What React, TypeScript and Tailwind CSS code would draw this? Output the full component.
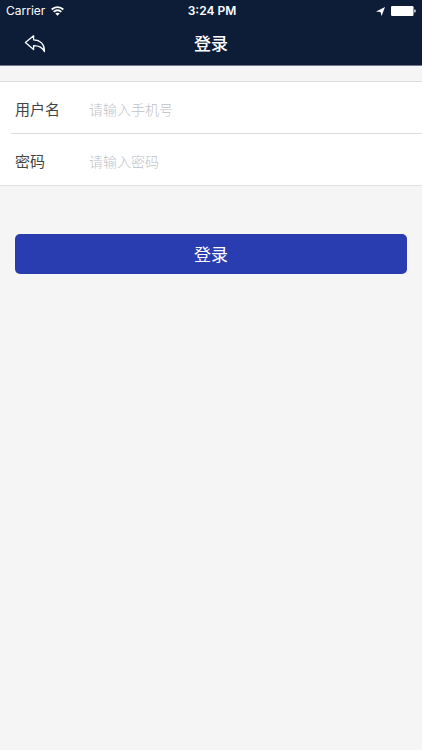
import React from "react";

function StatusBar() {
  return (
    <div className="grid h-[22px] grid-cols-3 items-center px-[6px] font-['Inter',sans-serif] text-[12px] leading-[22px]">
      <div className="flex items-center gap-[6px]">
        <span>Carrier</span>
        <svg width="13" height="10" viewBox="0 0 13 10" fill="none" stroke="currentColor" strokeWidth="1.9" aria-hidden="true">
          <path d="M0.7 3.5C4 0.3 9 0.3 12.3 3.5" />
          <path d="M2.7 5.9C5 3.9 8 3.9 10.3 5.9" />
          <path d="M6.5 9.8L4.3 7.6C5.6 6.6 7.4 6.6 8.7 7.6Z" fill="currentColor" stroke="none" />
        </svg>
      </div>
      <span className="pl-[2px] text-center font-semibold">3:24 PM</span>
      <div className="flex items-center justify-end gap-[6px]">
        <svg width="9" height="9" viewBox="0 0 9 9" fill="currentColor" aria-hidden="true">
          <path d="M9 0L5.6 9L4.5 5L0 4.4Z" />
        </svg>
        <svg width="25" height="10" viewBox="0 0 25 10" fill="currentColor" aria-hidden="true">
          <rect x="0" y="0" width="22.5" height="10" rx="1.2" />
          <path d="M23.3 3.3C25.2 3.6 25.2 6.4 23.3 6.7Z" />
        </svg>
      </div>
    </div>
  );
}

type FieldProps = {
  id: string;
  label: string;
  placeholder: string;
  type: string;
};

function Field({ id, label, placeholder, type }: FieldProps) {
  return (
    <div className="flex h-[51px] items-stretch pr-4 pl-[4px]">
      <label htmlFor={id} className="flex w-[74px] shrink-0 items-center pt-1 text-[15px] text-[#444444]">
        {label}
      </label>
      <input
        id={id}
        type={type}
        placeholder={placeholder}
        className="min-w-0 flex-1 bg-transparent pt-[3px] text-[14px] font-light text-[#444444] outline-none placeholder:text-[#bfbfc6]"
      />
    </div>
  );
}

export default function App() {
  return (
    <div className="min-h-screen bg-[#f5f5f5] font-['Noto_Sans_CJK_SC',sans-serif]">
      <header className="border-b border-[#6f788a] bg-[#0d1d38] text-white">
        <StatusBar />
        <div className="grid h-[43px] grid-cols-[1fr_auto_1fr] items-center">
          <button type="button" aria-label="返回" className="ml-6 w-fit">
            <svg width="22" height="18" viewBox="0 0 22 18" fill="none" stroke="currentColor" strokeWidth="1.3" strokeLinejoin="round" aria-hidden="true">
              <path d="M1.4 7.6L9.6 0.8V4.8C16 4.9 20.8 9 20.4 16.6C18.5 12.3 15 10.6 9.6 10.6V14.6Z" />
            </svg>
          </button>
          <h1 className="pb-[2px] text-[17px] font-medium">登录</h1>
        </div>
      </header>
      <form onSubmit={(e) => e.preventDefault()}>
        <div className="mt-[15px] border-y border-[#e0e0e1] bg-white pl-[11px]">
          <Field id="username" label="用户名" placeholder="请输入手机号" type="text" />
          <div className="border-t border-[#dcdcdd]">
            <Field id="password" label="密码" placeholder="请输入密码" type="password" />
          </div>
        </div>
        <div className="px-[15px] pt-[48px]">
          <button type="submit" className="h-[40px] w-full rounded-[5px] bg-[#293cb0] text-[17px] text-white">
            登录
          </button>
        </div>
      </form>
    </div>
  );
}
